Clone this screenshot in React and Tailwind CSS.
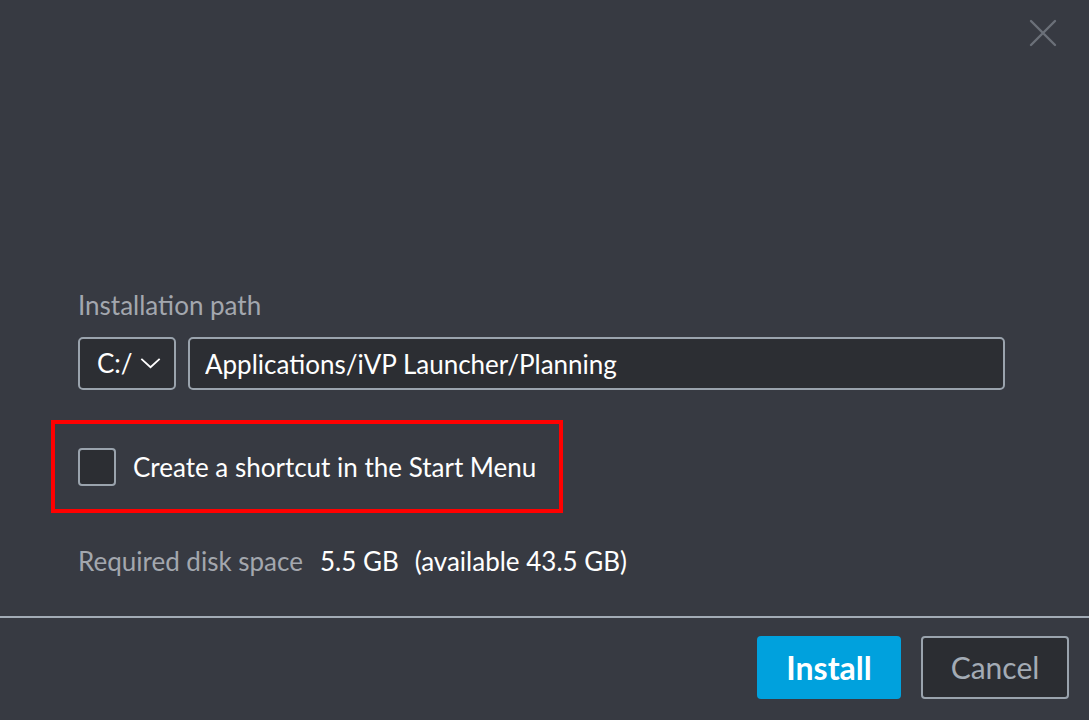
import React, { useState } from 'react';

const App = () => {
  const [shortcut, setShortcut] = useState(false);
  const [path, setPath] = useState('Applications/iVP Launcher/Planning');

  return (
    <div
      className="w-[1089px] h-[720px] bg-[#373a42] flex flex-col overflow-hidden"
      style={{ fontFamily: 'Lato, "Noto Sans", sans-serif' }}
    >
      {/* Header with close button */}
      <div className="flex justify-end pt-[19px] pr-[32px] h-[290px]">
        <button className="w-[28px] h-[28px] text-[#6b7079]">
          <svg viewBox="0 0 28 28" className="w-[28px] h-[28px]" fill="none" stroke="currentColor" strokeWidth="2.4" strokeLinecap="round">
            <path d="M2 2 L26 26 M26 2 L2 26" />
          </svg>
        </button>
      </div>

      {/* Body */}
      <div className="flex flex-col pl-[78px]">
        <label className="text-[26px] leading-[30px] text-[#a3a7ae]">Installation path</label>
        <div className="flex gap-[12px] mt-[17px]">
          <button className="w-[98px] h-[53px] rounded-[5px] border-2 border-[#9aa3ad] bg-[#2c2e33] flex items-center pl-[17px] gap-[7px] text-white text-[26px]">
            <span>C:/</span>
            <svg viewBox="0 0 22 12" className="w-[21px] h-[11px]" fill="none" stroke="currentColor" strokeWidth="2">
              <path d="M1 1 L11 10 L21 1" />
            </svg>
          </button>
          <input
            type="text"
            value={path}
            onChange={(e) => setPath(e.target.value)}
            className="w-[817px] h-[53px] rounded-[5px] border-2 border-[#9aa3ad] bg-[#2c2e33] px-[15px] text-white text-[26px] outline-none"
          />
        </div>

        {/* Highlighted checkbox row */}
        <div className="ml-[-27px] mt-[30px] w-[512px] h-[93px] border-[4px] border-[#ff0000] flex items-center pl-[23px] gap-[17px]">
          <button
            onClick={() => setShortcut(!shortcut)}
            className="w-[38px] h-[38px] rounded-[4px] border-2 border-[#9aa3ad] bg-[#2c2e33]"
          />
          <span className="text-[26px] leading-[32px] text-white">Create a shortcut in the Start Menu</span>
        </div>

        <div className="flex items-baseline mt-[32px] text-[26px] leading-[32px]">
          <span className="text-[#a3a7ae]">Required disk space</span>
          <span className="text-white ml-[17px]">5.5 GB</span>
          <span className="text-white ml-[16px]">(available 43.5 GB)</span>
        </div>
      </div>

      {/* Footer */}
      <div className="mt-[39px] border-t-2 border-[#a2abb5] flex justify-end gap-[20px] pt-[18px] pr-[20px]">
        <button className="w-[144px] h-[63px] rounded-[4px] bg-[#00a1dd] text-white text-[32px] font-bold">
          Install
        </button>
        <button className="w-[148px] h-[63px] rounded-[4px] border-2 border-[#9aa3ad] bg-[#2b2d32] text-[#a3abb5] text-[30px]">
          Cancel
        </button>
      </div>
    </div>
  );
};

export default App;
